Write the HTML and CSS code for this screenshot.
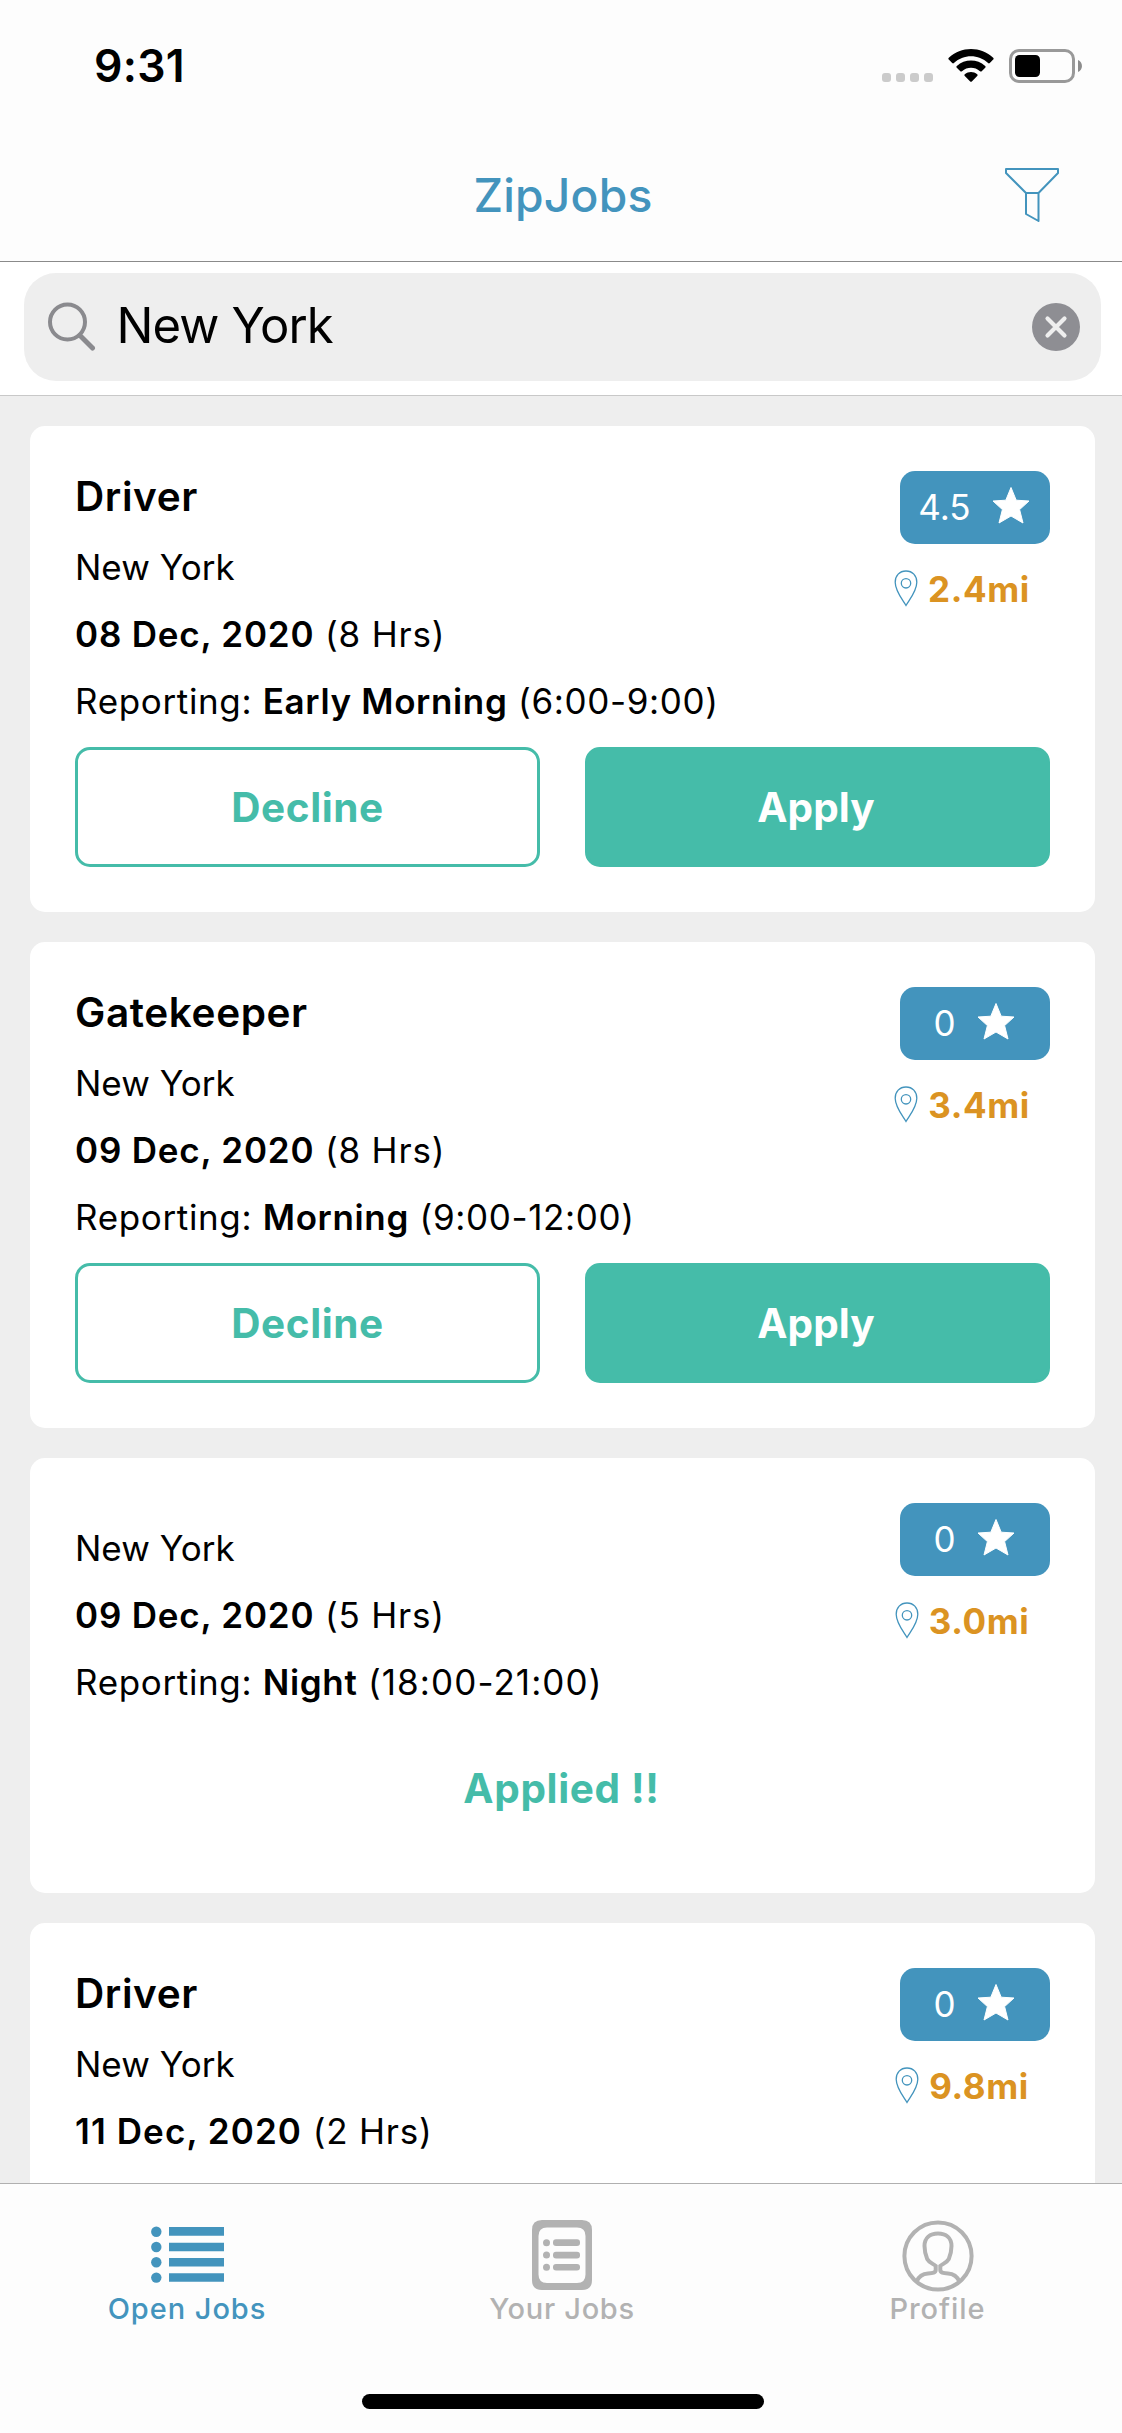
FILE: index.html
```html
<!DOCTYPE html>
<html lang="en">
<head>
<meta charset="utf-8">
<title>ZipJobs</title>
<link rel="stylesheet" href="styles.css">
</head>
<body>
<svg class="sprite" width="0" height="0" aria-hidden="true">
  <symbol id="star" viewBox="0 0 38 37"><path fill="currentColor" d="M19 0.5 24.2 13.2 37 14 27.6 22.6 31 36 19 29 7 36 10.4 22.6 1 14 13.8 13.2Z" stroke="currentColor" stroke-width="1" stroke-linejoin="round"/></symbol>
  <symbol id="pin" viewBox="0 0 24 37"><path fill="none" stroke="currentColor" stroke-width="1.3" d="M12 35.5C8 29 1.2 21 1.2 12.3 1.2 5.6 5.5 1 12 1s10.8 4.600 10.800 11.300C22.800 21 16 29 12 35.500Z"/><circle cx="12" cy="13.300" r="4.700" fill="none" stroke="currentColor" stroke-width="1.300"/></symbol>
</svg>
<div class="app">
  <header class="header">
    <div class="status">
      <span class="clock">9:31</span>
      <div class="indicators">
        <div class="signal"><i></i><i></i><i></i><i></i></div>
        <svg class="wifi" viewBox="0 0 46 34"><path d="M0.800 8.800C12.800-2.900 33.200-2.900 45.200 8.800c.6.600.6 1.200 0 1.800l-3.400 3.400c-.6.500-1.200.5-1.700 0C30.500 4.900 15.500 4.900 5.900 14c-.5.5-1.100.5-1.700 0L.8 10.600c-.6-.6-.6-1.200 0-1.800Z"/><path d="M8.800 17c8-7.300 20.400-7.300 28.400 0 .6.600.6 1.200 0 1.800l-3.500 3.400c-.5.500-1.100.5-1.700 0-5.200-4.600-12.800-4.600-18 0-.6.500-1.200.5-1.700 0l-3.500-3.400c-.6-.6-.6-1.200 0-1.800Z"/><path d="M16.800 25.200c3.700-3 8.700-3 12.400 0 .6.500.6 1.100 0 1.700l-5.400 5.500c-.5.500-1.100.5-1.600 0l-5.400-5.500c-.6-.6-.6-1.200 0-1.700Z"/></svg>
        <svg class="battery" viewBox="0 0 73 34"><rect x="1.500" y="1.500" width="63" height="31" rx="8.500" fill="none" stroke="#999" stroke-width="3"/><rect x="6" y="6" width="25" height="22" rx="4.500"/><path d="M69 11c5.300 2.200 5.300 9.800 0 12Z" fill="#8c8c8c"/></svg>
      </div>
    </div>
    <div class="nav">
      <h1 class="nav-title">ZipJobs</h1>
      <svg class="filter" viewBox="0 0 54 55"><path d="M1 1h52v4L33.500 25H21L1 5ZM21 25v21l12.500 7V25" fill="none" stroke="#4394bd" stroke-width="2" stroke-linejoin="round"/></svg>
    </div>
  </header>

  <div class="search">
    <div class="search-box">
      <svg class="loupe" viewBox="0 0 48 49"><circle cx="19.500" cy="20" r="17.500" fill="none" stroke="#8a8a8e" stroke-width="4"/><path d="M32 33.500 44.500 46" stroke="#8a8a8e" stroke-width="5" stroke-linecap="round"/></svg>
      <span class="search-text">New York</span>
      <svg class="clear" viewBox="0 0 48 48"><circle cx="24" cy="24" r="24" fill="#8e8e93"/><path d="M15.500 15.500l17 17m0-17-17 17" stroke="#eee" stroke-width="4.200" stroke-linecap="round"/></svg>
    </div>
  </div>

  <main class="list">
    <article class="card">
      <div class="info">
        <div class="details">
          <h2 class="title">Driver</h2>
          <p class="row place">New York</p>
          <p class="row"><b>08 Dec, 2020</b> (8 Hrs)</p>
          <p class="row report">Reporting: <b>Early Morning</b> (6:00-9:00)</p>
        </div>
        <div class="side">
          <div class="badge"><span>4.5</span><svg class="star"><use href="#star"/></svg></div>
          <div class="distance"><svg class="pin"><use href="#pin"/></svg><span>2.4mi</span></div>
        </div>
      </div>
      <div class="actions"><button class="btn outline">Decline</button><button class="btn solid">Apply</button></div>
    </article>

    <article class="card">
      <div class="info">
        <div class="details">
          <h2 class="title">Gatekeeper</h2>
          <p class="row place">New York</p>
          <p class="row"><b>09 Dec, 2020</b> (8 Hrs)</p>
          <p class="row report">Reporting: <b>Morning</b> (9:00-12:00)</p>
        </div>
        <div class="side">
          <div class="badge"><span>0</span><svg class="star"><use href="#star"/></svg></div>
          <div class="distance"><svg class="pin"><use href="#pin"/></svg><span>3.4mi</span></div>
        </div>
      </div>
      <div class="actions"><button class="btn outline">Decline</button><button class="btn solid">Apply</button></div>
    </article>

    <article class="card">
      <div class="info">
        <div class="details">
          <h2 class="title"></h2>
          <p class="row place">New York</p>
          <p class="row"><b>09 Dec, 2020</b> (5 Hrs)</p>
          <p class="row report">Reporting: <b>Night</b> <span class="ones">(18:00-21:00)</span></p>
        </div>
        <div class="side">
          <div class="badge"><span>0</span><svg class="star"><use href="#star"/></svg></div>
          <div class="distance"><svg class="pin"><use href="#pin"/></svg><span>3.0mi</span></div>
        </div>
      </div>
      <div class="applied">Applied !!</div>
    </article>

    <article class="card last">
      <div class="info">
        <div class="details">
          <h2 class="title">Driver</h2>
          <p class="row place">New York</p>
          <p class="row"><b class="ones">11 Dec, 2020</b> (2 Hrs)</p>
        </div>
        <div class="side">
          <div class="badge"><span>0</span><svg class="star"><use href="#star"/></svg></div>
          <div class="distance"><svg class="pin"><use href="#pin"/></svg><span>9.8mi</span></div>
        </div>
      </div>
    </article>
  </main>

  <footer class="footer">
    <nav class="tabs">
      <a class="tab active">
        <svg width="73" height="72" viewBox="0 0 73 72" fill="currentColor"><circle cx="5.300" cy="11.700" r="5.200"/><circle cx="5.300" cy="27" r="5.200"/><circle cx="5.300" cy="42.300" r="5.200"/><circle cx="5.300" cy="57.600" r="5.200"/><path d="M18 7h55v8.700H18zM18 22.700h55v8.600H18zM18 38h55v8.600H18zM18 53.200h55v8.600H18z"/></svg>
        <span>Open Jobs</span>
      </a>
      <a class="tab yours">
        <svg width="60" height="72" viewBox="0 0 60 72" fill="currentColor"><path fill-rule="evenodd" d="M10 0h40q10 0 10 10v50q0 10-10 10H10Q0 70 0 60V10Q0 0 10 0Zm5 7.500q-8.500 0-8.500 8.500v38.500q0 8.500 8.500 8.500h30q8.500 0 8.500-8.500V16q0-8.500-8.500-8.500Z"/><circle cx="14.500" cy="22.700" r="3.500"/><circle cx="14.500" cy="35" r="3.500"/><circle cx="14.500" cy="47.300" r="3.500"/><rect x="21" y="19.300" width="27" height="6.600" rx="3"/><rect x="21" y="31.800" width="27" height="6.600" rx="3"/><rect x="21" y="44" width="27" height="6.600" rx="3"/></svg>
        <span>Your Jobs</span>
      </a>
      <a class="tab profile">
        <svg width="72" height="72" viewBox="0 0 72 72" fill="none" stroke="currentColor" stroke-width="4"><circle cx="36" cy="36" r="33.600"/><path d="M14.500 61.500C17 56 21 53.800 26 53.500c5-.3 7.700-.8 7.700-3.500v-4c-2.500-2.200-6.700-3.500-8.500-7C24 36 22.500 31 22.500 26c0-8 5.500-12.500 13.500-12.500S49.500 18 49.500 26c0 5-1.500 10-2.700 13-1.800 3.500-6 4.800-8.500 7v4c0 2.700 2.700 3.200 7.700 3.500 5 .3 9 2.500 11.500 8"/></svg>
        <span>Profile</span>
      </a>
    </nav>
    <div class="home"></div>
  </footer>
</div>
</body>
</html>
```
FILE: styles.css
```css
* { box-sizing: border-box; }
body, h1, h2, p { margin: 0; }
body { background: #eee; font-family: Inter, "Liberation Sans", sans-serif; color: #000; }
.sprite { position: absolute; }
svg { display: block; flex: none; }

.app { width: 1122px; height: 2433px; display: flex; flex-direction: column; overflow: hidden; }

.header { height: 262px; flex: none; background: #fdfdfd; border-bottom: 1px solid #8a8a8a; }
.status { height: 132px; display: flex; justify-content: space-between; padding: 0 40px 0 94px; align-items: center; }
.clock { font-size: 44.5px; font-weight: 600; letter-spacing: .3px; }
.indicators { display: flex; align-items: center; }
.signal { display: flex; gap: 5px; margin: 22px 15px 0 0; }
.signal i { width: 9px; height: 9px; border-radius: 3px; background: #cbcbcb; }
.wifi { width: 46px; height: 34px; margin-right: 15px; }
.battery { width: 73px; height: 34px; }
.nav { height: 129px; display: grid; grid-template-columns: 1fr auto 1fr; align-items: center; padding: 0 63px; }
.nav-title { grid-column: 2; font-size: 46.2px; line-height: 56px; font-weight: 500; letter-spacing: .2px; color: #4394bd; margin: 0 0 3px 4px; }
.filter { width: 54px; height: 55px; justify-self: end; margin-bottom: 2px; }

.search { flex: none; height: 134px; background: #fff; border-bottom: 1px solid #c8c8c8; padding: 11px 21px 0 24px; }
.search-box { height: 108px; border-radius: 32px; background: #eee; display: flex; align-items: center; padding: 0 21px 0 24px; }
.loupe { width: 48px; height: 49px; margin-bottom: 2px; }
.search-text { flex: 1; font-size: 49px; letter-spacing: -.9px; padding: 0 0 4px 20.5px; }
.clear { width: 48px; height: 48px; }

.list { flex: 1; min-height: 0; overflow: hidden; padding: 30px 27px 0 30px; display: flex; flex-direction: column; gap: 30px; }
.card { flex: none; background: #fff; border-radius: 15px; padding: 45px; }
.card.last { height: 486px; }
.info { display: flex; justify-content: space-between; }
.title { font-size: 40.5px; line-height: 51px; font-weight: 600; letter-spacing: .6px; margin-bottom: 12px; }
.row { font-size: 35px; line-height: 67px; letter-spacing: .8px; white-space: nowrap; }
.row b { font-weight: 600; }
.place { letter-spacing: 0; }
.report { letter-spacing: .65px; }
.ones { letter-spacing: 1.1px; }

.side { width: 155px; display: flex; flex-direction: column; }
.badge { align-self: flex-end; width: 150px; height: 73px; border-radius: 15px; background: #4394bd; color: #fff; font-size: 35px; display: flex; align-items: center; justify-content: center; gap: 21px; padding: 0 2px 2px 0; }
.star { width: 38px; height: 37px; margin-bottom: 3px; }
.distance { display: flex; align-items: center; justify-content: center; gap: 10px; padding-right: 21px; margin-top: 23px; color: #db9322; font-size: 35px; line-height: 42px; font-weight: 700; letter-spacing: .6px; }
.distance span { padding-top: 1px; }
.pin { width: 24px; height: 37px; color: #4394bd; margin-bottom: 1px; }

.actions { display: grid; grid-template-columns: 1fr 1fr; gap: 45px; margin-top: 12px; }
.btn { height: 120px; border: 3px solid #45bca9; border-radius: 15px; padding: 0; font: 700 40.5px Inter, "Liberation Sans", sans-serif; letter-spacing: .6px; }
.outline { background: #fff; color: #45bca9; }
.solid { background: #45bca9; color: #fff; letter-spacing: .1px; padding-right: 3px; }
.applied { height: 120px; margin-top: 12px; padding-right: 2px; line-height: 121px; text-align: center; font-size: 40.5px; font-weight: 700; letter-spacing: .65px; color: #45bca9; }

.footer { flex: none; height: 250px; background: #fdfdfd; border-top: 1px solid #b0b0b0; display: flex; flex-direction: column; align-items: center; justify-content: space-between; padding: 36px 0 24px; }
.tabs { width: 100%; display: grid; grid-template-columns: repeat(3, 1fr); }
.tab { display: flex; flex-direction: column; align-items: center; color: #b2b2b2; font-size: 29px; line-height: 34px; font-weight: 500; letter-spacing: .95px; }
.tab.active { color: #4394bd; }
.tab.yours { padding-left: 2px; letter-spacing: .7px; }
.tab.profile { padding-left: 5px; }
.home { width: 402px; height: 15px; border-radius: 8px; background: #000; margin-left: 4px; }
```
